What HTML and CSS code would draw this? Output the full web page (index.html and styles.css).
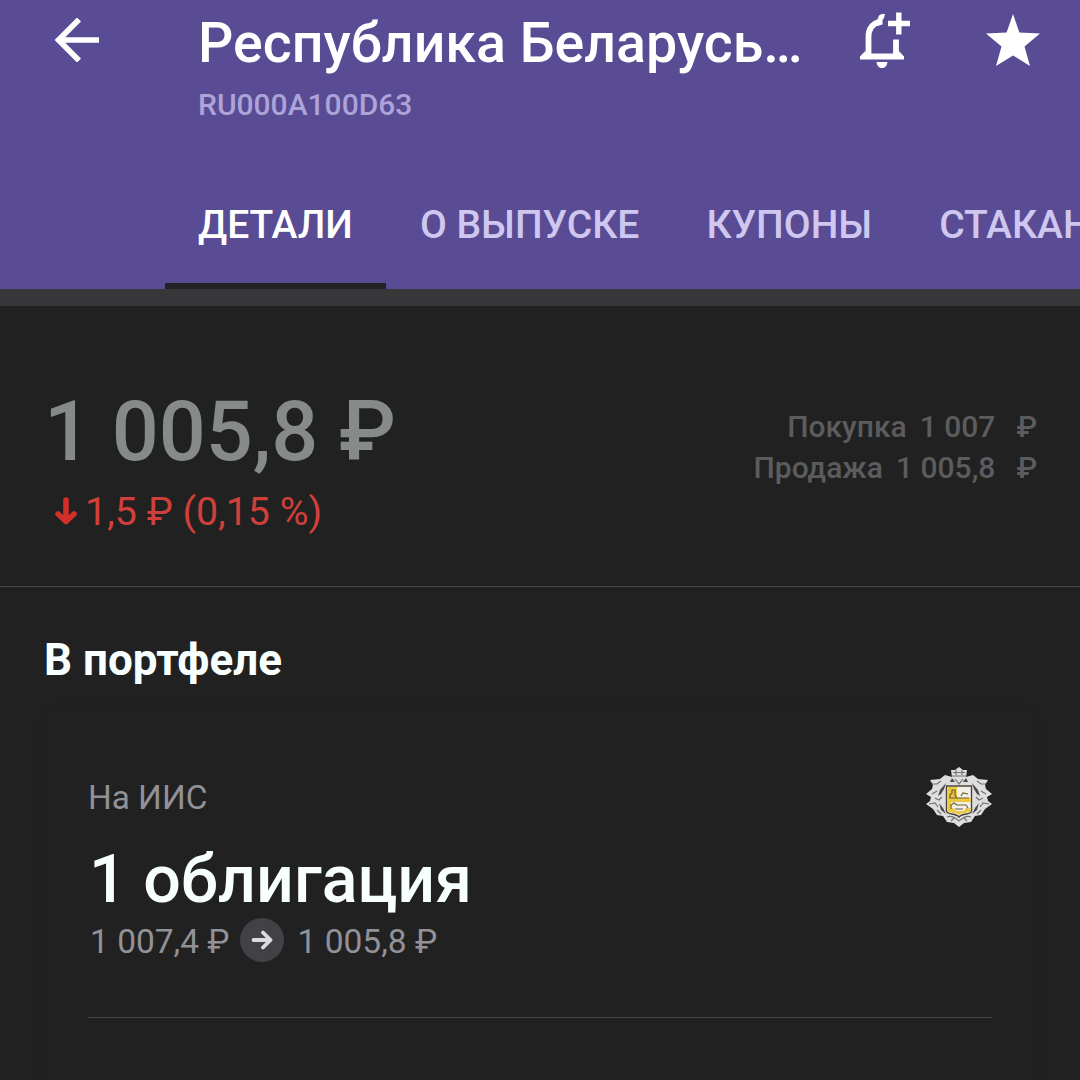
FILE: index.html
```html
<!DOCTYPE html>
<html lang="ru">

<head>
    <meta charset="UTF-8">
    <meta name="viewport" content="width=device-width, initial-scale=1.0">
    <title>Республика Беларусь</title>
    <link rel="stylesheet" href="styles.css">
</head>

<body>
    <!-- Header -->
    <header>
        <div class="toolbar">
            <svg class="icon-back" viewBox="0 0 44 44" fill="none" stroke="#fff" stroke-width="5.6">
                <path d="M44 22H4M24 1.5L3.5 22L24 42.5" />
            </svg>
            <div class="heading">
                <h1>Республика Беларусь…</h1>
                <p class="isin">RU000A100D63</p>
            </div>
            <svg class="icon-bell" viewBox="0 0 50 56">
                <path d="M8.5 42V25C8.5 17 12 12 19 10M36 27.500V42" fill="none" stroke="#fff" stroke-width="5.800" />
                <path d="M16.500 9.500L19 3.500L21.500 2H25L24 6L22.500 8V12.500L17 14Z" fill="#fff" />
                <path d="M0 47.500V44.500L5.700 38.500V41.500H38.500V38.500L44 44.500V47.500ZM16.500 50H27.500C27 54 25 56 22 56S17 54 16.500 50Z" fill="#fff" />
                <path d="M28 11.500H50M38.800 .5V22.500" fill="none" stroke="#fff" stroke-width="5.400" />
            </svg>
            <svg class="icon-star" viewBox="0 0 54 52">
                <path d="M27 0L33.400 18.500L54 19.500L38.500 32.500L44 52L27 41.500L10 52L15.500 32.500L0 19.500L20.600 18.500Z" fill="#fff" />
            </svg>
        </div>
        <nav class="tabs">
            <a class="tab active">ДЕТАЛИ</a>
            <a class="tab">О ВЫПУСКЕ</a>
            <a class="tab">КУПОНЫ</a>
            <a class="tab">СТАКАН</a>
        </nav>
    </header>

    <!-- Price Section -->
    <section class="price-section">
        <div>
            <div class="price">1 005,8 ₽</div>
            <div class="change">
                <svg class="icon-down" viewBox="0 0 22 28" fill="none" stroke="#d32f2a" stroke-width="5.5" stroke-linecap="round" stroke-linejoin="round">
                    <path d="M11 3V23M3 17L11 24.500L19 17" />
                </svg>
                <span>1,5 ₽ (0,15 %)</span>
            </div>
        </div>
        <div class="quotes">
            <div class="quote"><span>Покупка</span><span>1 007</span><span class="currency">₽</span></div>
            <div class="quote"><span>Продажа</span><span>1 005,8</span><span class="currency">₽</span></div>
        </div>
    </section>

    <!-- Portfolio Section -->
    <section class="portfolio">
        <h2>В портфеле</h2>
        <div class="card">
            <div class="account">
                <span>На ИИС</span>
                <svg class="crest" viewBox="0 0 66 60">
                    <path d="M25 3L29 3L33 0L37 3L41 3L40 10L47 8L52 12L62 13L59 18L60 22L66 27L61 30L62 34L66 37L59 42L55 48L49 49L45 55L38 56L33 60L28 56L21 55L17 49L11 48L7 42L0 37L4 34L5 30L0 27L6 22L7 18L4 13L14 12L19 8L26 10Z" fill="#dededf" />
                    <!-- gaps between the leaves -->
                    <path d="M20 16L14 23L12 29L15 27L18 22ZM46 16L52 23L54 29L51 27L48 22ZM13 36L15 43L20 47L17 41ZM53 36L51 43L46 47L49 41ZM26 11L24 15L29 15ZM40 11L42 15L37 15Z" fill="#4a4a4d" />
                    <g fill="none" stroke="#737376" stroke-width="1.200">
                        <path d="M25 9H41M27 5.500H39M30 3V8M36 3V8M29 12L33 17L37 12" />
                        <path d="M6 17H11L15 14M60 17H55L51 14M6 27L11 24M60 27L55 24M9 31L13 33L16 30M57 31L53 33L50 30M3 37L9 36L12 40M63 37L57 36L54 40" />
                        <path d="M11 43L15 47M55 43L51 47M21 50C26 48 29 51 33 54M45 50C40 48 37 51 33 54M25 54L28 51M41 54L38 51" />
                    </g>
                    <path d="M20.500 19H45.500V44C45.500 48 36 46 33 50C30 46 20.500 48 20.500 44Z" fill="#f2f0e6" stroke="#4b463a" stroke-width="1.400" />
                    <path d="M21.500 20H31V31H45V35H21.500ZM21.500 41H27L30 44H38L40 41H44.500V44C44 46 35 45 33 48C31 45 22 46 21.500 44ZM21.500 35H25V42H21.500Z" fill="#ebc83f" />
                    <path d="M24 31V28L26 26V23H29V28L31 31M23 31H43M35 29L37 26L42 27M25 42V38L28 36L31 38H40L42 41M29 42H37" fill="none" stroke="#6e6033" stroke-width="1.200" />
                </svg>
            </div>
            <div class="amount">1 облигация</div>
            <div class="dynamics">
                <span>1 007,4 ₽</span>
                <svg class="icon-next" viewBox="0 0 44 44">
                    <circle cx="22" cy="22" r="22" fill="#424246" />
                    <path d="M13.500 22H30M23 14.500L30.500 22L23 29.500" fill="none" stroke="#dcdcde" stroke-width="3.800" stroke-linecap="round" stroke-linejoin="round" />
                </svg>
                <span>1 005,8 ₽</span>
            </div>
        </div>
    </section>
</body>

</html>
```

FILE: styles.css
```css
* {
    box-sizing: border-box;
}

body {
    margin: 0;
    height: 1080px;
    overflow: hidden;
    background-color: #212121;
    color: #f8ffff;
    font-family: Roboto, sans-serif;
}

h1,
h2,
p {
    margin: 0;
}

svg {
    display: block;
    flex-shrink: 0;
}

/* Header */
header {
    height: 306px;
    background-color: #594c94;
    border-bottom: 17px solid #373739;
    overflow: hidden;
}

.toolbar {
    display: flex;
    align-items: flex-start;
    height: 160px;
    padding: 11px 40px 0 55px;
}

.icon-back {
    width: 44px;
    height: 44px;
    margin-top: 7px;
}

.heading {
    width: 661px;
    padding-left: 99px;
    margin-right: auto;
    white-space: nowrap;
}

h1 {
    font-size: 55.5px;
    line-height: 66px;
    font-weight: 500;
    color: #fff;
}

.isin {
    margin-top: 10px;
    font-size: 30px;
    line-height: 36px;
    font-weight: 500;
    color: #aca3d9;
}

.icon-bell {
    width: 50px;
    height: 56px;
    margin-top: 1px;
    margin-right: 76px;
}

.icon-star {
    width: 54px;
    height: 52px;
    margin-top: 3px;
}

.tabs {
    display: flex;
    height: 129px;
    padding-left: 165px;
}

.tab {
    flex-shrink: 0;
    padding: 0 33.5px;
    font-size: 39px;
    line-height: 130px;
    font-weight: 500;
    color: #cfc7ef;
}

.tab.active {
    padding-left: 33px;
    color: #fff;
    box-shadow: inset 0 -6px #212126;
}

/* Price */
.price-section {
    display: flex;
    justify-content: space-between;
    height: 281px;
    padding: 81px 43px 0 44px;
    border-bottom: 1px solid #48484a;
}

.price {
    font-size: 82.8px;
    line-height: 90px;
    font-weight: 500;
    color: #868a89;
}

.change {
    display: flex;
    align-items: center;
    gap: 8px;
    margin-top: 12px;
    padding-left: 11px;
    font-size: 39.3px;
    line-height: 46px;
    color: #cf403b;
}

.icon-down {
    width: 22px;
    height: 28px;
    margin-bottom: 3px;
}

.quotes {
    padding-top: 19px;
    font-size: 30px;
    line-height: 41px;
    font-weight: 500;
    color: #5c5c5e;
}

.quote {
    display: flex;
    justify-content: flex-end;
    gap: 13px;
}

.currency {
    margin-left: 8px;
}

/* Portfolio */
.portfolio {
    padding: 47px 44px 0;
}

h2 {
    font-size: 44px;
    line-height: 52px;
    font-weight: 700;
}

.card {
    margin-top: 20px;
    padding: 61px 0 0;
    height: 420px;
    border-radius: 24px;
    box-shadow: 0 0 14px rgba(0, 0, 0, 0.03);
}

.account {
    display: flex;
    justify-content: space-between;
    height: 60px;
    margin: 0 44px;
    font-size: 33.3px;
    line-height: 62px;
    color: #929198;
}

.crest {
    width: 66px;
    height: 60px;
}

.amount {
    margin: 14px 45px 0;
    font-size: 66.3px;
    line-height: 77px;
    font-weight: 500;
}

.dynamics {
    display: flex;
    align-items: center;
    gap: 11px;
    height: 100px;
    margin: 0 44px;
    padding: 0 0 55px 2px;
    border-bottom: 1px solid #48484a;
    font-size: 33.5px;
    line-height: 40px;
    color: #929198;
}

.dynamics span {
    padding-top: 4px;
}

.icon-next {
    width: 44px;
    height: 44px;
    margin-left: -1px;
    margin-right: 3px;
}
```
